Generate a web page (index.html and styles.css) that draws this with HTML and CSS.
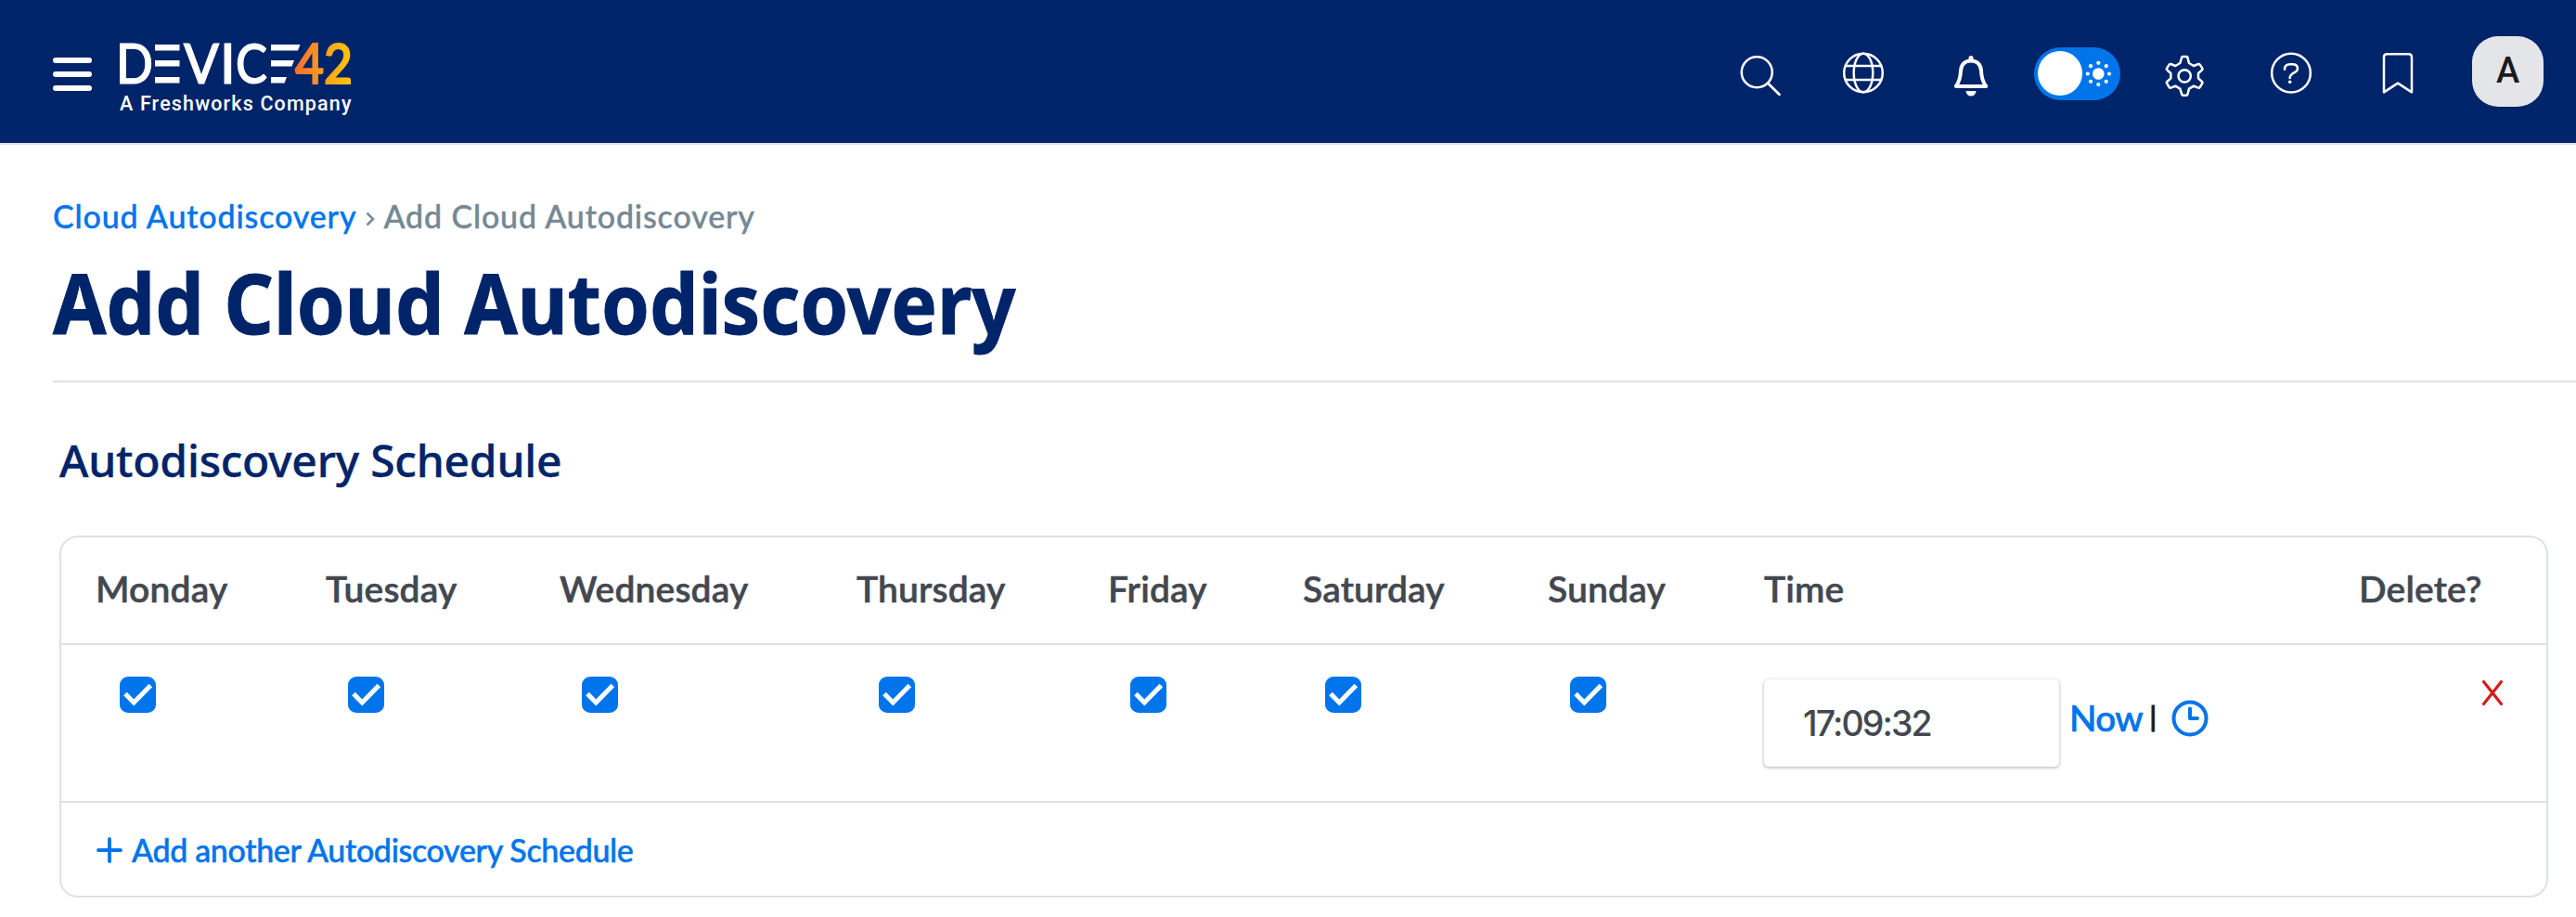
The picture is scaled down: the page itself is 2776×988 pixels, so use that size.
FILE: index.html
```html
<!DOCTYPE html>
<html lang="en">
<head>
<meta charset="utf-8">
<title>Add Cloud Autodiscovery</title>
<link rel="stylesheet" href="styles.css">
</head>
<body>
<svg width="0" height="0" class="defs">
  <symbol id="check" viewBox="0 0 39 39"><path d="M6 18.5 15.3 28 33.3 9.5" fill="none" stroke="#fff" stroke-width="5"/></symbol>
</svg>
<header class="topbar">
  <button class="menu" aria-label="Menu"><span></span><span></span><span></span></button>
  <div class="brand">
    <svg class="logo" width="252" height="45" viewBox="0 0 252 45" role="img" aria-label="Device42">
      <defs>
        <linearGradient id="amber" gradientUnits="userSpaceOnUse" x1="190" y1="0" x2="250" y2="0"><stop offset="0" stop-color="#f4702f"/><stop offset=".5" stop-color="#f9a11b"/><stop offset="1" stop-color="#fdc70c"/></linearGradient>
      </defs>
      <g class="logo-text">
        <text x="-4" y="43" textLength="40" lengthAdjust="spacingAndGlyphs">D</text>
        <text x="69" y="43" textLength="38" lengthAdjust="spacingAndGlyphs">V</text>
        <text x="108" y="43">I</text>
        <text x="125" y="43" textLength="34" lengthAdjust="spacingAndGlyphs">C</text>
        <text class="logo-num" x="189" y="43" textLength="62" lengthAdjust="spacingAndGlyphs">42</text>
      </g>
      <path fill="#fff" d="M38 1h26.500v6.500H38zM38 18h26.500v6.500H38zM38 36h26.500v6.500H38zM163 1h31.500l-2.500 6.500h-29zM163 18h25l-2.500 6.500H163zM163 36h17l-2.500 6.500H163z"/>
    </svg>
    <div class="tagline">A Freshworks Company</div>
  </div>
  <nav class="tools">
    <a class="tool"><svg class="ico" viewBox="0 0 48 48"><circle cx="24.300" cy="22.700" r="16.500"/><path d="M36 34.500 48.500 46.800" stroke-width="2.800"/></svg></a>
    <a class="tool"><svg class="ico" viewBox="0 0 48 48"><circle cx="24" cy="23.500" r="20.800"/><ellipse cx="24" cy="23.500" rx="10.300" ry="20.800"/><path d="M5 16h38M5 31h38"/></svg></a>
    <a class="tool"><svg class="ico" viewBox="0 0 48 48"><path stroke-width="4" d="M24 10.500C17 10.500 13.500 15 13 21C12.700 29 11.500 33 7.800 38H40.200C36.500 33 35.300 29 35 21C34.500 15 31 10.500 24 10.500Z"/><path class="solid" d="M21.500 10V7.500a2.500 2.500 0 0 1 5 0V10zM18.500 43h11a5.500 5.500 0 0 1-11 0z"/></svg></a>
    <a class="tool"><svg class="switch" width="93" height="57" viewBox="0 0 93 57"><rect width="93" height="57" rx="28.500" fill="#0075eb"/><g fill="#fff"><circle cx="28" cy="28" r="24"/><circle cx="69.300" cy="28.500" r="6.300"/><circle cx="69.300" cy="16.800" r="2.100"/><circle cx="69.300" cy="40" r="2.100"/><circle cx="57.800" cy="28.500" r="2.100"/><circle cx="81" cy="28.500" r="2.100"/><circle cx="61" cy="20.200" r="2.100"/><circle cx="77.700" cy="20.200" r="2.100"/><circle cx="61" cy="36.800" r="2.100"/><circle cx="77.700" cy="36.800" r="2.100"/></g></svg></a>
    <a class="tool"><svg class="ico" viewBox="0 0 48 48"><g transform="scale(.33333) translate(-120 -105)" stroke-width="7.500"><path d="M184 124Q185 123 187 123H199Q201 123 202 125L207 144 222 153 237 147Q240 146 242 149L250 161Q252 164 249 166L237 177V193L249 204Q252 206 250 209L242 222Q240 225 237 224L222 218 207 227 202 246Q201 248 199 248H187Q185 248 184 246L178 227 163 218 148 224Q145 225 143 222L135 209Q133 206 136 204L148 193V177L136 166Q133 164 135 161L143 149Q145 146 148 147L163 153 178 144Z"/><circle cx="192.500" cy="185.500" r="20"/></g></svg></a>
    <a class="tool"><svg class="ico" viewBox="0 0 48 48"><g transform="scale(.33333) translate(-465 -105)" stroke-width="7.500"><circle cx="537" cy="176" r="62.500"/><path d="M516 164C516 152 522 148 534 148H541C553 148 558 153 558 162C558 177 533 174 533 192"/><circle class="solid" cx="533" cy="205" r="5.500"/></g></svg></a>
    <a class="tool"><svg class="ico" viewBox="0 0 48 48"><path transform="scale(.33333) translate(-810 -105)" stroke-width="7.500" d="M837 238V125Q837 115 847 115H917Q927 115 927 125V238L882 209Z"/></svg></a>
  </nav>
  <div class="avatar">A</div>
</header>
<main class="page">
  <nav class="crumbs"><a>Cloud Autodiscovery</a><svg width="10" height="16" viewBox="0 0 10 16"><path d="M1.500 1.500 8 8 1.500 14.500" fill="none" stroke="#7a8c97" stroke-width="2.600"/></svg><span>Add Cloud Autodiscovery</span></nav>
  <h1 class="title"><span>Add Cloud Autodiscovery</span></h1>
  <section class="schedule">
    <h2 class="subtitle">Autodiscovery Schedule</h2>
    <div class="table">
      <div class="row head">
        <div>Monday</div><div class="nudge">Tuesday</div><div class="nudge">Wednesday</div><div class="nudge">Thursday</div><div class="nudge">Friday</div><div class="nudge">Saturday</div><div class="nudge">Sunday</div><div>Time</div><div class="nudge">Delete?</div>
      </div>
      <div class="row body">
        <div><svg class="box"><use href="#check"/></svg></div>
        <div><svg class="box"><use href="#check"/></svg></div>
        <div><svg class="box"><use href="#check"/></svg></div>
        <div><svg class="box"><use href="#check"/></svg></div>
        <div><svg class="box"><use href="#check"/></svg></div>
        <div><svg class="box"><use href="#check"/></svg></div>
        <div><svg class="box"><use href="#check"/></svg></div>
        <div class="time">
          <div class="field">17:09:32</div>
          <a class="now">Now</a><span class="bar">|</span>
          <svg class="clock" width="40" height="40" viewBox="0 0 40 40"><circle cx="20" cy="20" r="17.500"/><path d="M20 9.500V20H28"/></svg>
        </div>
        <div class="delete"><svg width="22" height="27" viewBox="0 0 22 27"><path d="M1.500 1.500 20.500 25.500M20.500 1.500 1.500 25.500" stroke="#d01f1c" stroke-width="3.200" stroke-linecap="round"/></svg></div>
      </div>
      <div class="add"><svg width="28" height="28" viewBox="0 0 28 28"><path d="M14 2V26M2 14H26" stroke="#0075eb" stroke-width="3.800" stroke-linecap="round"/></svg><a>Add another Autodiscovery Schedule</a></div>
    </div>
  </section>
</main>
</body>
</html>
```
FILE: styles.css
```css
* { box-sizing: border-box; }
body { margin: 0; background: #fff; font-family: Lato, "Liberation Sans", sans-serif; font-weight: 500; }
.defs { position: absolute; }
svg { display: block; flex: none; overflow: visible; }

.topbar { display: flex; height: 156px; padding: 0 35px 0 57px; background: #002469; border-bottom: 2px solid #dfe1ec; }
.menu { display: flex; flex-direction: column; gap: 9px; width: 42px; margin: 62px 30px 0 0; padding: 0; border: 0; background: none; }
.menu span { height: 6px; border-radius: 3px; background: #fff; }
.brand { width: 252px; padding-top: 47px; }
.logo-text { fill: #fff; stroke: #fff; stroke-width: 1.2px; font: 500 59px Lato, sans-serif; }
.logo-num { fill: url(#amber); stroke: url(#amber); stroke-width: 2px; }
.tagline { margin-top: 5px; font: 500 21.5px/30px Roboto, sans-serif; letter-spacing: 1.15px; color: #fff; white-space: nowrap; }
.tools { display: flex; margin-left: auto; }
.tool { display: flex; align-items: center; justify-content: center; width: 115.2px; padding-top: 4px; }
.ico { width: 48px; height: 48px; fill: none; stroke: #fff; stroke-width: 2.5px; stroke-linecap: round; stroke-linejoin: round; }
.solid { fill: #fff; stroke: none; }
.avatar { width: 77px; height: 76px; margin: 39px 0 0 22px; border-radius: 28px; background: #e4e5e9; color: #1b1b1b; font: 500 38px/75px Roboto, sans-serif; text-align: center; }

.page { padding-left: 57px; }
.crumbs { display: flex; align-items: center; height: 40px; margin-top: 57px; font-size: 34px; line-height: 40px; letter-spacing: .85px; color: #758893; -webkit-text-stroke: .4px; }
.crumbs a { color: #0075eb; }
.crumbs svg { margin: 6px 9px 0 10px; }
.title { height: 122px; margin: 12px 0 23px; font: 700 90px/121px "Noto Sans", sans-serif; color: #002469; white-space: nowrap; -webkit-text-stroke: 1px; }
.title span { display: inline-block; transform: scaleX(.925); transform-origin: left; }
.schedule { padding: 54px 30px 0 7px; border-top: 2px solid #dde2e6; }
.subtitle { margin: 0 0 51px; font: 500 48px/60px "Noto Sans", sans-serif; letter-spacing: -.22px; color: #002469; -webkit-text-stroke: .4px; }

.table { border: 2px solid #dde1e6; border-radius: 20px; }
.row { display: grid; grid-template-columns: 246px 252px 320px 271px 210px 264px 235px 639px 1fr; padding-left: 37px; border-bottom: 2px solid #dde1e6; }
.head { height: 116px; padding-top: 31px; font-size: 39px; line-height: 48px; font-weight: 600; letter-spacing: .15px; color: #434850; -webkit-text-stroke: .5px; }
.nudge { padding-left: 2px; }
.body { height: 170px; }
.box { width: 39px; height: 39px; margin: 34px 0 0 26px; border-radius: 9px; background: #0075eb; }
.time { display: flex; align-items: flex-start; padding-top: 37px; }
.field { width: 318px; height: 94px; padding-left: 42px; border-radius: 5px; box-shadow: 0 1px 3px 1px rgba(0, 0, 0, .2); font: 500 37.5px/95px Inter, sans-serif; letter-spacing: -1.9px; color: #434850; }
.now { margin: 17px 0 0 11px; font-size: 38.5px; line-height: 48px; letter-spacing: -.6px; color: #0075eb; -webkit-text-stroke: .7px; }
.bar { margin: 20px 0 0 7px; font: 500 34px/40px Roboto, sans-serif; color: #1b1b1b; -webkit-text-stroke: .8px; }
.clock { margin: 22px 0 0 15px; fill: none; stroke: #0075eb; stroke-width: 4px; stroke-linecap: round; stroke-linejoin: round; }
.delete { padding: 38px 0 0 135px; }
.add { display: flex; height: 100px; padding: 30px 0 0 38px; font-size: 34px; line-height: 41px; letter-spacing: -.35px; color: #0075eb; -webkit-text-stroke: .5px; }
.add svg { margin: 7px 10px 0 0; }
```
